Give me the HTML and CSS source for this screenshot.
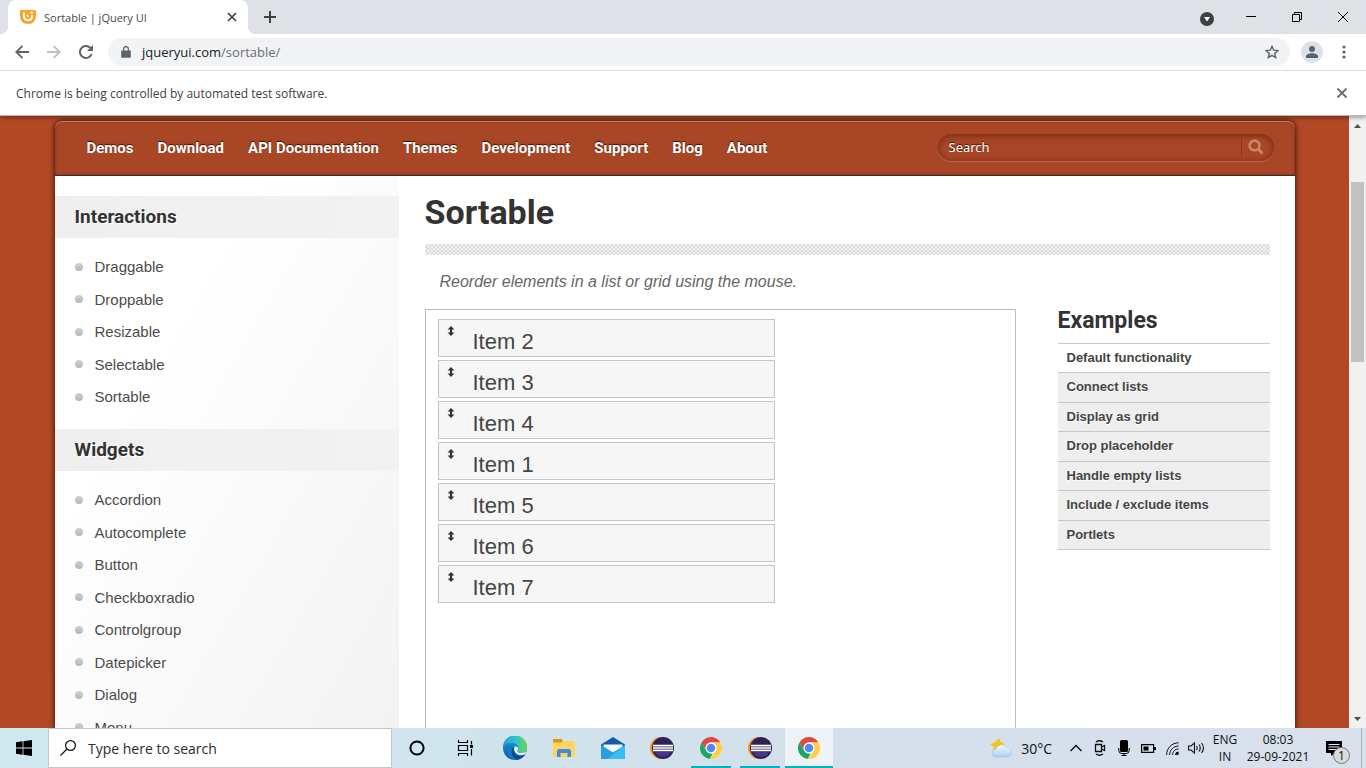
FILE: index.html
```html
<!DOCTYPE html>
<html lang="en">
<head>
<meta charset="utf-8">
<title>Sortable | jQuery UI</title>
<link rel="stylesheet" href="styles.css">
</head>
<body>
<svg class="defs" aria-hidden="true">
  <defs>
    <linearGradient id="edgeTop" x1="0" y1="0" x2="1" y2="0"><stop offset="0" stop-color="#2a9fd0"/><stop offset=".5" stop-color="#2fbfd0"/><stop offset="1" stop-color="#6ad84c"/></linearGradient>
    <linearGradient id="edgeLow" x1="0" y1="0" x2="0" y2="1"><stop offset="0" stop-color="#1fa0e2"/><stop offset="1" stop-color="#0c59a6"/></linearGradient>
    <linearGradient id="cloud" x1="0" y1="0" x2="0" y2="1"><stop offset="0" stop-color="#f5fbff"/><stop offset="1" stop-color="#a5cfee"/></linearGradient>
    <symbol id="chrome" viewBox="0 0 24 24">
      <circle cx="12" cy="12" r="11" fill="#fff"/>
      <path fill="#db4a3e" d="M2.500 6.500A11 11 0 0 1 21.500 6.500H12a5.500 5.500 0 0 0-4.800 8.200z"/>
      <path fill="#1da462" d="M2.500 6.500 7.200 14.700A5.500 5.500 0 0 0 14 17.100L10.800 23A11 11 0 0 1 2.500 6.500z"/>
      <path fill="#ffcd46" d="M21.500 6.500A11 11 0 0 1 10.800 23L16.800 14.700A5.500 5.500 0 0 0 12 6.500z"/>
      <circle cx="12" cy="12" r="5.400" fill="#fff"/><circle cx="12" cy="12" r="4.300" fill="#4c8bf5"/>
    </symbol>
    <symbol id="eclipse" viewBox="0 0 24 24">
      <circle cx="11" cy="12" r="11" fill="#f7941e"/><circle cx="13" cy="12" r="11" fill="#2c2255"/>
      <path fill="#473788" d="M5 16h16a9 9 0 0 1-16 0z"/>
      <path stroke="#fff" stroke-width="1.600" d="M3 9.600h20M3 12h20M3 14.400h20"/>
    </symbol>
    <symbol id="updown" viewBox="0 0 8 10"><path fill="#333" d="M4 0 7.400 3.600H5.100V6.400H7.400L4 10 .6 6.400H2.900V3.600H.6z"/></symbol>
  </defs>
</svg>

<header class="browser">
  <div class="tabstrip">
    <div class="tab">
      <svg width="16" height="16" viewBox="0 0 16 16"><path fill="#f9a32b" d="M1 1h14q1 0 1 1v4.500q0 8.500-8 8.500T0 6.500V2q0-1 1-1z"/><path d="M4 3.500v3.300q0 4.400 4 4.400t4-4V6" fill="none" stroke="#fff" stroke-width="2"/><path d="M7.200 5.500q0 2 1.600 2" fill="none" stroke="#fff" stroke-width="1.200"/><circle cx="11.800" cy="3.600" r="1.200" fill="#fff"/></svg>
      <span class="tab-title">Sortable | jQuery UI</span>
      <button class="tab-close" aria-label="Close tab"><svg width="10" height="10" viewBox="0 0 10 10"><path d="M1 1l8 8M9 1 1 9" stroke="#3c4043" stroke-width="1.700"/></svg></button>
    </div>
    <button class="new-tab" aria-label="New tab"><svg width="12" height="12" viewBox="0 0 12 12"><path d="M6 0v12M0 6h12" stroke="#3c4043" stroke-width="2"/></svg></button>
    <div class="window-controls">
      <button aria-label="Tab search"><svg width="14" height="14" viewBox="0 0 14 14"><circle cx="7" cy="7" r="7" fill="#3c4043"/><path d="M4 5h6L7 9.500z" fill="#fff"/></svg></button>
      <button aria-label="Minimize"><svg width="10" height="10" viewBox="0 0 10 10"><path d="M0 4.500h10" stroke="#000"/></svg></button>
      <button aria-label="Restore"><svg width="10" height="10" viewBox="0 0 10 10"><path d="M.5 2.500h7v7h-7zM2.500 2.500v-2h7v7h-2" fill="none" stroke="#000"/></svg></button>
      <button aria-label="Close"><svg width="10" height="10" viewBox="0 0 10 10"><path d="M0 0l10 10M10 0 0 10" stroke="#000"/></svg></button>
    </div>
  </div>
  <div class="toolbar">
    <button aria-label="Back"><svg width="14" height="14" viewBox="0 0 14 14"><path d="M14 7H1.500M7.500.8 1.300 7l6.200 6.200" fill="none" stroke="#5f6368" stroke-width="1.900"/></svg></button>
    <button aria-label="Forward"><svg width="14" height="14" viewBox="0 0 14 14"><path d="M0 7h12.500M6.500.8 12.700 7l-6.200 6.200" fill="none" stroke="#bdc0c4" stroke-width="1.900"/></svg></button>
    <button aria-label="Reload"><svg width="14" height="14" viewBox="0 0 14 14"><path d="M12.600 9A6 6 0 1 1 11.300 2.800L13 4.600" fill="none" stroke="#5f6368" stroke-width="2"/><path d="M14 0v6H8z" fill="#5f6368"/></svg></button>
    <div class="omnibox">
      <svg width="10" height="12" viewBox="0 0 10 12"><path d="M1 4.500h8q.8 0 .8.8v5.600q0 .8-.8.8H1q-.8 0-.8-.8V5.300q0-.8.8-.8z" fill="#5f6368"/><path d="M2.600 5V3a2.400 2.400 0 0 1 4.800 0v2" fill="none" stroke="#5f6368" stroke-width="1.300"/></svg>
      <span class="url">jqueryui.com<span class="path">/sortable/</span></span>
      <button class="star" aria-label="Bookmark this tab"><svg width="14" height="14" viewBox="0 0 14 14"><path d="m7 1.300 1.700 3.900 4.200.4-3.200 2.800 1 4.200L7 10.400l-3.700 2.200 1-4.200L1.100 5.600l4.200-.4z" fill="none" stroke="#5f6368" stroke-width="1.400"/></svg></button>
    </div>
    <button class="avatar" aria-label="Profile"><svg width="22" height="22" viewBox="0 0 22 22"><circle cx="11" cy="11" r="11" fill="#dee1e6"/><circle cx="11" cy="8" r="3" fill="#55627a"/><path d="M5 17v-1.500C5 13 9 12.300 11 12.300s6 .7 6 3.200V17z" fill="#55627a"/></svg></button>
    <button class="kebab" aria-label="Menu"><svg width="4" height="14" viewBox="0 0 4 14"><g fill="#5f6368"><circle cx="2" cy="2" r="1.600"/><circle cx="2" cy="7" r="1.600"/><circle cx="2" cy="12" r="1.600"/></g></svg></button>
  </div>
  <div class="infobar">
    <span>Chrome is being controlled by automated test software.</span>
    <button aria-label="Dismiss"><svg width="10" height="10" viewBox="0 0 10 10"><path d="M.5.5l9 9M9.500.5l-9 9" stroke="#6f7275" stroke-width="2"/></svg></button>
  </div>
</header>

<div class="viewport">
  <div class="page">
    <div class="container">
      <div class="site-header">
        <nav>
          <a href="#">Demos</a><a href="#">Download</a><a href="#">API Documentation</a><a href="#">Themes</a><a href="#">Development</a><a href="#">Support</a><a href="#">Blog</a><a href="#">About</a>
        </nav>
        <form class="search">
          <input type="text" placeholder="Search" aria-label="Search">
          <button type="button" aria-label="Submit search"><svg width="16" height="16" viewBox="0 0 16 16"><circle cx="6.500" cy="6.500" r="4.900" fill="none" stroke="#cc8469" stroke-width="2.600"/><path d="M10.500 10.500l4 4" stroke="#cc8469" stroke-width="3"/></svg></button>
        </form>
      </div>
      <div class="content">
        <aside class="sidebar">
          <h3>Interactions</h3>
          <ul>
            <li><a href="#">Draggable</a></li><li><a href="#">Droppable</a></li><li><a href="#">Resizable</a></li><li><a href="#">Selectable</a></li><li><a href="#">Sortable</a></li>
          </ul>
          <h3>Widgets</h3>
          <ul>
            <li><a href="#">Accordion</a></li><li><a href="#">Autocomplete</a></li><li><a href="#">Button</a></li><li><a href="#">Checkboxradio</a></li><li><a href="#">Controlgroup</a></li><li><a href="#">Datepicker</a></li><li><a href="#">Dialog</a></li><li><a href="#">Menu</a></li>
          </ul>
        </aside>
        <main>
          <h1>Sortable</h1>
          <div class="rule"></div>
          <p class="desc">Reorder elements in a list or grid using the mouse.</p>
          <div class="columns">
            <div class="demo">
              <ul class="sortable">
                <li><svg><use href="#updown"/></svg>Item 2</li>
                <li><svg><use href="#updown"/></svg>Item 3</li>
                <li><svg><use href="#updown"/></svg>Item 4</li>
                <li><svg><use href="#updown"/></svg>Item 1</li>
                <li><svg><use href="#updown"/></svg>Item 5</li>
                <li><svg><use href="#updown"/></svg>Item 6</li>
                <li><svg><use href="#updown"/></svg>Item 7</li>
              </ul>
            </div>
            <div class="examples">
              <h2>Examples</h2>
              <ul>
                <li class="active"><a href="#">Default functionality</a></li>
                <li><a href="#">Connect lists</a></li>
                <li><a href="#">Display as grid</a></li>
                <li><a href="#">Drop placeholder</a></li>
                <li><a href="#">Handle empty lists</a></li>
                <li><a href="#">Include / exclude items</a></li>
                <li><a href="#">Portlets</a></li>
              </ul>
            </div>
          </div>
        </main>
      </div>
    </div>
  </div>
  <div class="scrollbar" aria-hidden="true">
    <svg width="7" height="4" viewBox="0 0 7 4"><path d="M0 4 3.500 0 7 4z" fill="#505050"/></svg>
    <div class="track"><div class="thumb"></div></div>
    <svg width="7" height="4" viewBox="0 0 7 4"><path d="M0 0l3.500 4L7 0z" fill="#505050"/></svg>
  </div>
</div>

<footer class="taskbar">
  <button class="start" aria-label="Start"><svg width="16" height="16" viewBox="0 0 16 16"><path d="M0 2.200 6.600 1.300v6.300H0zM7.400 1.200 16 0v7.600H7.400zM0 8.400h6.600v6.300L0 13.800zM7.400 8.400H16V16l-8.600-1.200z"/></svg></button>
  <label class="task-search">
    <svg width="16" height="16" viewBox="0 0 16 16"><circle cx="10.500" cy="5.500" r="4.900" fill="none" stroke="#111" stroke-width="1.200"/><path d="M7 9 .5 15.500" stroke="#111" stroke-width="1.300"/></svg>
    <input type="text" placeholder="Type here to search" aria-label="Type here to search">
  </label>
  <div class="apps">
    <button aria-label="Cortana"><svg width="16" height="16" viewBox="0 0 16 16"><circle cx="8" cy="8" r="6.600" fill="none" stroke="#000" stroke-width="2"/></svg></button>
    <button aria-label="Task view"><svg width="18" height="16" viewBox="0 0 18 16"><path d="M1.500 0v2.500h9V0M1.500 5.500h9v5h-9zM1.500 16v-2.500h9V16M14.500 1v3.500M14.500 9v6.500" fill="none" stroke="#000" stroke-width="1.200"/><path d="M13 5h3v3h-3z"/></svg></button>
    <button aria-label="Edge"><svg width="24" height="24" viewBox="0 0 24 24"><circle cx="12" cy="12" r="12" fill="url(#edgeLow)"/><path d="M0 11A12 12 0 0 1 24 11.500C24 15 21.500 17 18 17c-3 0-4.500-1.500-3.300-3.200C16.500 10 13 7 8.500 7 4 7 1 8.500 0 11z" fill="url(#edgeTop)"/><path d="M8.200 12.500C7 18 11 23 16.500 23 11 25.500 4.500 22 5 15.500 5.200 12 7 10 9.500 9.500 8.800 10.500 8.300 11.500 8.200 12.500z" fill="#1479c8"/><path d="M11.800 10.500c-2 2-1.500 7 3 8.800 2.700 1 5.500.5 7.700-1.300A12 12 0 0 1 14 23.800C8 21 6.500 13 11.800 10.500z" fill="#0b4a8e"/><path d="M11.800 10.500c2.500-.5 4.200 1.800 2.900 3.300-1 1.700.3 3.200 3.300 3.200 2.500 0 4-.8 5-2l-.5 3c-4 2.500-9.500 1.300-11-3-.6-1.700-.6-3.300.3-4.500z" fill="#e6f1f5"/></svg></button>
    <button aria-label="File Explorer"><svg width="22" height="20" viewBox="0 0 22 20"><path d="M0 1h8l2 2h12v16H0z" fill="#ffd55f"/><path d="M0 1h8.500l1.500 2-1.500 1.500H0z" fill="#d9960f"/><path d="M4 19v-6q0-2 2-2h10q2 0 2 2v6h-3.500v-4h-7v4z" fill="#3a8edb"/></svg></button>
    <button aria-label="Mail"><svg width="24" height="22" viewBox="0 0 24 22"><path d="M0 7.500 12 0l12 7.500V12H0z" fill="#0f5da8"/><path d="M2.500 7.500h19v7H2.500z" fill="#f2f7fb"/><path d="M0 8l12 7.500L24 8v14H0z" fill="#2a9de2"/><path d="M24 8 6 22h18z" fill="#38bdf0"/></svg></button>
    <button aria-label="Eclipse"><svg width="24" height="24"><use href="#eclipse"/></svg></button>
    <button class="open" aria-label="Chrome"><svg width="24" height="24"><use href="#chrome"/></svg></button>
    <button class="open" aria-label="Eclipse window"><svg width="24" height="24"><use href="#eclipse"/></svg></button>
    <button class="open current" aria-label="Chrome window"><svg width="24" height="24"><use href="#chrome"/></svg></button>
  </div>
  <div class="tray">
    <button class="weather"><svg width="22" height="20" viewBox="0 0 22 20"><path d="M9 0l1.500 4 3.500 1-1 7-8 2-2.500-1.500L4 9 0 6l4.500-1.500z" fill="#f8c21c"/><path d="M6 19a4 4 0 0 1 0-8 5.500 5.500 0 0 1 10-1.500A4.800 4.800 0 0 1 17.500 19z" fill="url(#cloud)" stroke="#9cc6e6" stroke-width=".6"/></svg>30°C</button>
    <button class="cell" aria-label="Show hidden icons"><svg width="12" height="8" viewBox="0 0 12 8"><path d="M.5 7 6 1.500 11.500 7" fill="none" stroke="#111" stroke-width="1.500"/></svg></button>
    <button class="cell" aria-label="Meet now"><svg width="12" height="16" viewBox="0 0 12 16"><path d="M1.500 4.500h6v7h-6zM7.500 7l3-1.500v5l-3-1.500M2 2q3.500-2.500 7 0M2 14q3.500 2.500 7 0" fill="none" stroke="#111" stroke-width="1.300"/></svg></button>
    <button class="cell" aria-label="Microphone"><svg width="12" height="16" viewBox="0 0 12 16"><rect x="2" y="0" width="8" height="12" rx="1.500"/><path d="M.8 8v2.500q0 3 3 3h4.400q3 0 3-3V8M6 13v3M3.500 15.500h5" fill="none" stroke="#000"/></svg></button>
    <button class="cell" aria-label="Battery"><svg width="15" height="9" viewBox="0 0 15 9"><path d="M.6.6h12v7.800H.6z" fill="none" stroke="#000" stroke-width="1.200"/><path d="M2.500 2.500h5v4h-5zM13 3h2v3h-2z"/></svg></button>
    <button class="cell" aria-label="Wi-Fi"><svg width="13" height="13" viewBox="0 0 13 13"><g fill="none" stroke="#111"><path d="M.6 13C.6 6 6 .8 12.500.8M3.600 13c0-5 4-9 9-9M6.600 13c0-3.500 2.500-6 6-6"/><path d="M9.500 13q0-3 3-3"/></g><circle cx="11.300" cy="11.500" r="1.500"/></svg></button>
    <button class="cell" aria-label="Volume"><svg width="17" height="12" viewBox="0 0 17 12"><path d="M.6 4h2.500L6.500.8v10.400L3.100 8H.6zM8.500 4q1.500 2 0 4M11 2.500q2.500 3.500 0 7M13.500 1q4 5 0 10" fill="none" stroke="#111" stroke-width="1.100"/></svg></button>
    <button class="lang"><span>ENG</span><span>IN</span></button>
    <button class="clock"><span>08:03</span><span>29-09-2021</span></button>
    <button class="notify" aria-label="Notifications"><svg width="16" height="15" viewBox="0 0 16 15"><path d="M0 0h16v12H9l-4 3v-3H0z"/><path d="M2.500 3.500h11M2.500 6h11M2.500 8.500h8" stroke="#dfe6ef"/></svg><span class="badge">1</span></button>
  </div>
</footer>
</body>
</html>
```
FILE: styles.css
```css
* { box-sizing: border-box; }
body {
  margin: 0;
  height: 100vh;
  display: flex;
  flex-direction: column;
  overflow: hidden;
  font-family: "Liberation Sans", Arial, sans-serif;
  color: #333;
}
button { border: 0; padding: 0; background: none; font: inherit; color: inherit; display: flex; align-items: center; justify-content: center; }
ul { list-style: none; margin: 0; padding: 0; }
h1, h2, h3, p { margin: 0; }
a { color: inherit; text-decoration: none; }
svg { display: block; flex: none; }
.defs { position: absolute; width: 0; height: 0; }

/* Browser chrome */
.browser { flex: none; position: relative; z-index: 2; background: #fff; font-family: "Open Sans", "Noto Sans", sans-serif; box-shadow: 0 1px 5px rgba(0, 0, 0, .45); }
.tabstrip { display: flex; align-items: center; height: 34px; background: #dee1e6; padding-left: 8px; }
.tab { display: flex; align-items: center; width: 240px; height: 34px; padding: 0 10px 0 12px; background: #fff; border-radius: 8px 8px 0 0; position: relative; }
.tab::before, .tab::after { content: ""; position: absolute; bottom: 0; width: 8px; height: 8px; }
.tab::before { left: -8px; background: radial-gradient(circle at 0 0, #dee1e6 8px, #fff 8px); }
.tab::after { right: -8px; background: radial-gradient(circle at 100% 0, #dee1e6 8px, #fff 8px); }
.tab-title { flex: 1; margin-left: 8px; font-size: 11px; color: #45494d; }
.tab-close { width: 12px; height: 16px; }
.new-tab { width: 44px; height: 34px; }
.window-controls { display: flex; align-items: center; margin-left: auto; height: 28px; }
.window-controls button { width: 46px; height: 28px; }
.window-controls button:first-child { width: 42px; padding-top: 4px; }
.toolbar { display: flex; align-items: center; height: 37px; padding: 0 15px 0 6px; border-bottom: 1px solid #dadce0; }
.toolbar > button { width: 32px; height: 32px; }
.omnibox { flex: 1; display: flex; align-items: center; gap: 11px; height: 28px; margin: 0 6px; padding: 0 11px 0 13px; border-radius: 14px; background: #f1f3f4; }
.url { flex: 1; font-size: 13px; color: #202124; }
.path { color: #6a6e73; }
.toolbar .kebab { width: 14px; margin-left: 9px; }
.infobar { display: flex; align-items: center; justify-content: space-between; height: 45px; padding: 0 19px 0 16px; border-bottom: 1px solid #bdb5b2; font-size: 12px; color: #3c4043; }

/* Site */
.viewport { flex: 1; min-height: 0; display: flex; }
.page { flex: 1; min-width: 0; overflow: hidden; display: flex; padding: 5px 0 0; background: #b24926; }
.container { width: 100%; max-width: 1240px; margin: 0 auto; display: flex; flex-direction: column; box-shadow: 0 0 5px 1px rgba(40, 10, 0, .75); border-radius: 8px 8px 0 0; }
.site-header { flex: none; display: flex; align-items: center; justify-content: space-between; height: 55px; padding: 0 21px 0 32px; background: #a84626; border-radius: 8px 8px 0 0; border-bottom: 1px solid #333; box-shadow: inset 0 1px 0 #c5816b, inset 0 0 3px rgba(60, 15, 0, .5); }
.site-header nav { display: flex; gap: 24px; font: 700 15px/22px Roboto, sans-serif; color: #fff; text-shadow: 0 -1px 1px #3a1205; white-space: nowrap; }
.search { display: flex; width: 336px; height: 27px; padding: 4px 0; margin-bottom: 2px; border-radius: 14px; background: #a84626; box-shadow: inset 0 1px 5px 1px #7c2e14, 0 1px 0 #bd694e; }
.search input { flex: 1; min-width: 0; border: 0; outline: 0; background: none; padding: 0 11px; font: 13px/18px "Noto Sans", sans-serif; color: #fff; text-shadow: 0 -1px 1px #3a1205; }
.search input::placeholder { color: #fff; opacity: 1; }
.search button { width: 33px; padding-right: 4px; border-left: 1px solid #883719; }
.content { flex: 1; min-height: 0; display: flex; background: #fff; }
.sidebar { flex: none; width: 344px; padding-top: 20px; background: linear-gradient(120deg, #fff 30%, #f1f1f1 110%); overflow: hidden; }
.sidebar h3 { height: 42px; padding-left: 20px; font: 700 19px/41px Roboto, sans-serif; background: linear-gradient(90deg, #efefef, #f2f2f2); color: #333; text-shadow: 1px 1px 0 #fff; }
.sidebar ul { display: grid; grid-auto-rows: 33px 32px; padding: 12px 0 16px 20px; }
.sidebar li { display: flex; align-items: center; gap: 12px; font-size: 15px; color: #4c4c4c; }
.sidebar li::before { content: ""; width: 8px; height: 8px; border-radius: 50%; background: linear-gradient(#d2d2d2, #b5b5b5); }
main { flex: 1; min-width: 0; display: flex; flex-direction: column; padding: 15px 25px 0 26px; }
h1 { font: 700 34px/42px Roboto, sans-serif; }
.rule { flex: none; height: 11px; margin-top: 11px; background: repeating-conic-gradient(#dedede 0 25%, #eeeeee 0 50%) 0 0 / 4px 4px; }
.desc { margin: 16px 15px 0; font-size: 16px; line-height: 22px; font-style: italic; color: #666; }
.columns { flex: 1; display: flex; align-items: stretch; gap: 42px; margin-top: 16px; }
.demo { flex: 1; padding: 9px 12px; border: 1px solid #bbb; border-bottom: 0; }
.sortable { display: flex; flex-direction: column; gap: 3px; width: 337px; }
.sortable li { display: flex; gap: 18px; height: 38px; padding: 6px 8px; border: 1px solid #c5c5c5; background: #f6f6f6; font-size: 22px; line-height: 32px; color: #454545; }
.sortable svg { width: 8px; height: 10px; }
.examples { flex: none; width: 212px; }
.examples h2 { font: 700 23px/24px Roboto, sans-serif; margin-bottom: 10px; }
.examples ul { display: grid; grid-auto-rows: 29px 30px; border-bottom: 1px solid #c8c8c8; }
.examples li { padding-left: 9px; border-top: 1px solid #c8c8c8; background: #eee; font-size: 13px; line-height: 28px; font-weight: 700; color: #444; text-shadow: 0 1px 0 #fff; }
.examples .active { background: #fff; }
.scrollbar { flex: none; width: 17px; display: flex; flex-direction: column; align-items: center; padding: 8px 0 7px; background: #f1f1f1; }
.track { flex: 1; width: 100%; padding: 54px 2px 0; }
.thumb { height: 180px; background: #c1c1c1; }

/* Taskbar */
.taskbar { flex: none; display: flex; height: 40px; background: linear-gradient(90deg, #cfe8ef, #d0e3ed 40%, #d5dfec 65%, #d8e1ec); font-family: "Open Sans", "Noto Sans", sans-serif; color: #111; }
.start { width: 48px; }
.task-search { display: flex; align-items: center; gap: 12px; width: 344px; padding: 0 11px; background: #fff; border: 1px solid #c3c7ca; }
.task-search input { flex: 1; min-width: 0; border: 0; outline: 0; padding: 2px 0 0; font: 14px/20px "Open Sans", sans-serif; color: #222; }
.task-search input::placeholder { color: #2b2b2b; opacity: 1; }
.apps { display: flex; gap: 1px; padding-left: 1px; }
.apps button { width: 48px; }
.apps .open { background: linear-gradient(#00b3c4, #00b3c4) center bottom / 40px 2px no-repeat; }
.apps .current { background: linear-gradient(#00b3c4, #00b3c4) center bottom / 48px 2px no-repeat, #edf3f7; }
.tray { display: flex; margin-left: auto; padding-right: 4px; font-size: 12px; line-height: 17px; }
.weather { gap: 9px; margin-right: 12px; font-size: 14px; }
.cell { width: 24px; }
.lang, .clock { flex-direction: column; }
.lang { width: 34px; }
.clock { width: 72px; }
.notify { width: 48px; padding-right: 8px; border-right: 1px solid #a9b1ba; position: relative; }
.badge { position: absolute; left: 19px; top: 19px; width: 17px; height: 17px; border: 1px solid #777; border-radius: 50%; background: #d8dadd; text-align: center; line-height: 15px; }
```
